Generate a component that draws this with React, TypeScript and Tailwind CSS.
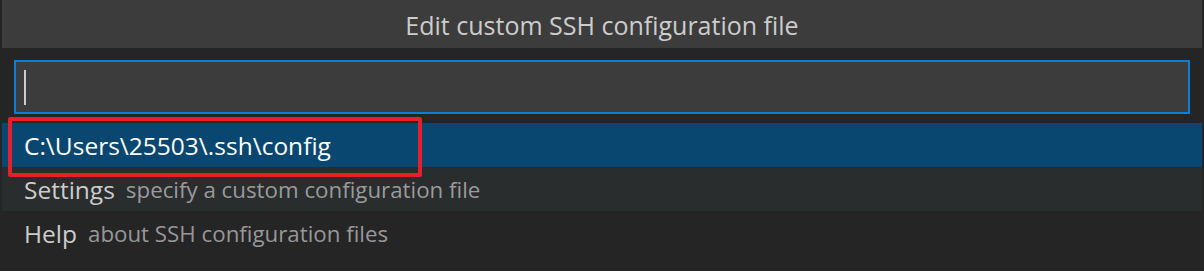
export default function App() {
  const font = { fontFamily: '"Open Sans", "Noto Sans", sans-serif' };

  return (
    <div className="w-[1204px] h-[271px] bg-[#252526] px-[2px]" style={font}>
      {/* Title bar */}
      <div className="h-[48px] bg-[#3c3c3c] flex items-center justify-center pt-[2px]">
        <span className="text-[25px] text-[#cccccc] leading-none">Edit custom SSH configuration file</span>
      </div>

      {/* Input */}
      <div className="pt-[12px] px-[12px]">
        <div className="h-[54px] border-2 border-[#0a7fd6] bg-[#3c3c3c] pl-[8px] pt-[8px]">
          <div className="w-[2px] h-[35px] bg-[#cccccc]" />
        </div>
      </div>

      {/* List */}
      <div className="mt-[9px]">
        <div className="relative h-[44px] bg-[#094771] flex items-center pl-[22px] pt-[3px]">
          <span className="text-[24.5px] text-white leading-none">C:\Users\25503\.ssh\config</span>
          <div className="absolute left-[6px] top-[-6px] w-[414px] h-[60px] border-4 border-[#e5202a] rounded-[2px]" />
        </div>
        <div className="h-[44px] bg-[#2a2d2e] flex items-center pl-[22px] gap-[11px] pt-[3px]">
          <span className="text-[24.5px] text-[#cccccc] leading-none">Settings</span>
          <span className="text-[22.3px] text-[#cccccc]/70 leading-none">specify a custom configuration file</span>
        </div>
        <div className="h-[44px] flex items-center pl-[22px] gap-[11px] pt-[3px]">
          <span className="text-[24.5px] text-[#cccccc] leading-none">Help</span>
          <span className="text-[22.3px] text-[#cccccc]/70 leading-none">about SSH configuration files</span>
        </div>
      </div>
    </div>
  );
}
